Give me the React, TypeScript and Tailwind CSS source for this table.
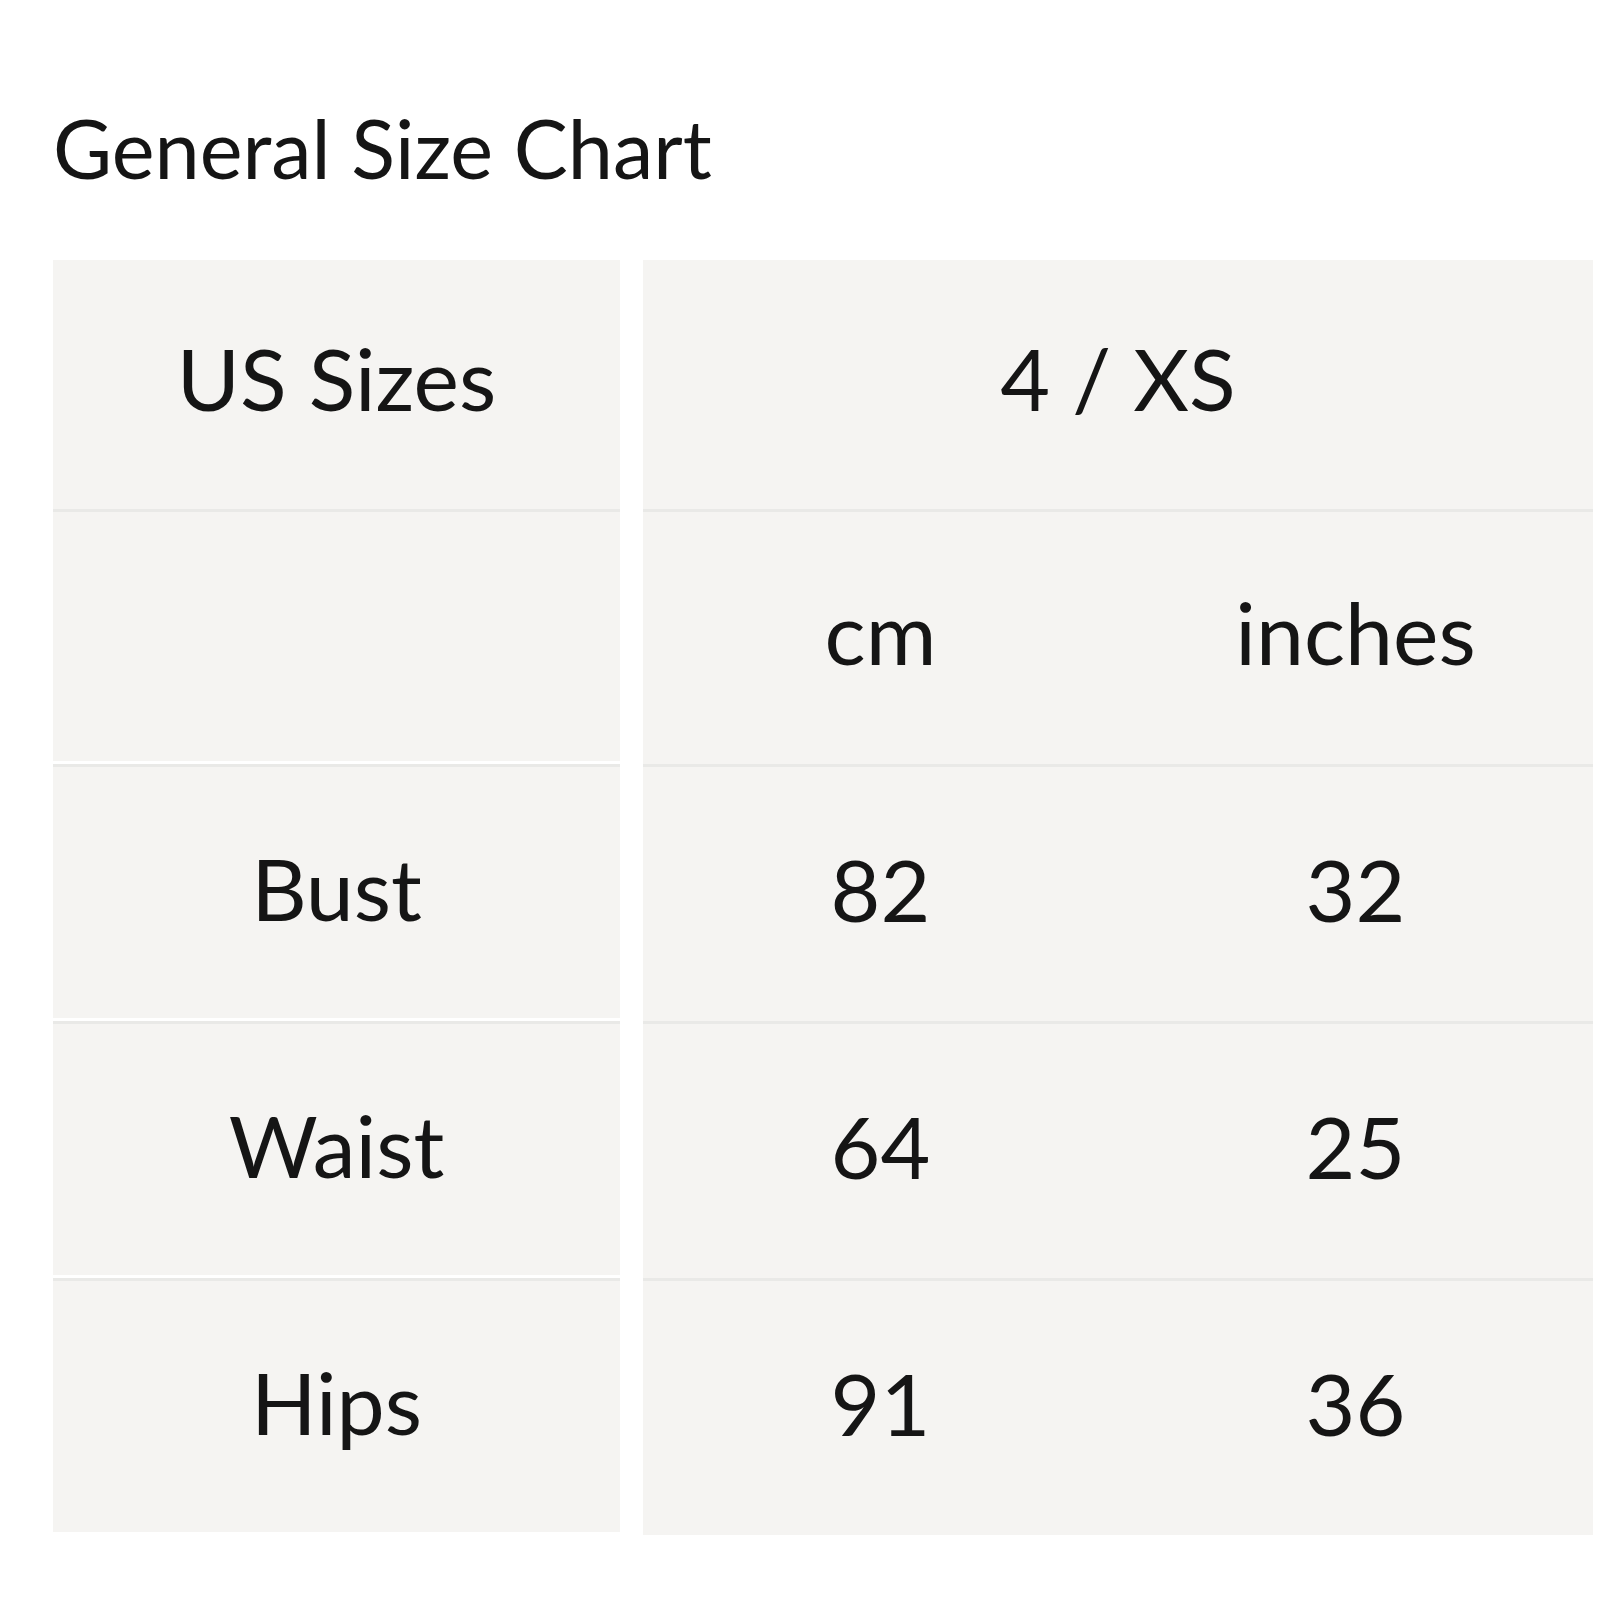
import React from 'react';

const rows = [
  { label: 'Bust', cm: '82', inches: '32' },
  { label: 'Waist', cm: '64', inches: '25' },
  { label: 'Hips', cm: '91', inches: '36' },
];

const head = 'h-[249px] bg-[#f5f4f2] flex items-center justify-center pb-[14px]';
const unit = 'h-[252px] bg-[#f5f4f2] flex items-center justify-center pb-[12px]';
const cell = 'h-[254px] bg-[#f5f4f2] flex items-center justify-center pb-[10px]';

const App = () => {
  return (
    <div
      className="min-h-[1600px] w-[1600px] overflow-hidden bg-white pl-[53px] pt-[107px] text-[#151515]"
      style={{ fontFamily: 'Lato, "Open Sans", sans-serif' }}
    >
      <h1 className="text-[81px] leading-none font-normal">General Size Chart</h1>

      <div className="mt-[72px] grid grid-cols-[567px_950px] gap-x-[23px] text-[86px] leading-none">
        {/* header row */}
        <div className={head}>US Sizes</div>
        <div className={head}>4 / XS</div>

        {/* units row */}
        <div className={`${unit} border-t-[3px] border-[#e9e9e7]`}></div>
        <div className="grid grid-cols-2 border-t-[3px] border-[#e9e9e7]">
          <div className={unit}>cm</div>
          <div className={unit}>inches</div>
        </div>

        {rows.map((row) => (
          <React.Fragment key={row.label}>
            <div className={`${cell} border-t-[3px] border-[#e9e9e7]`}>{row.label}</div>
            <div className="grid grid-cols-2 border-t-[3px] border-[#e9e9e7]">
              <div className={cell}>{row.cm}</div>
              <div className={cell}>{row.inches}</div>
            </div>
          </React.Fragment>
        ))}
      </div>
    </div>
  );
};

export default App;
